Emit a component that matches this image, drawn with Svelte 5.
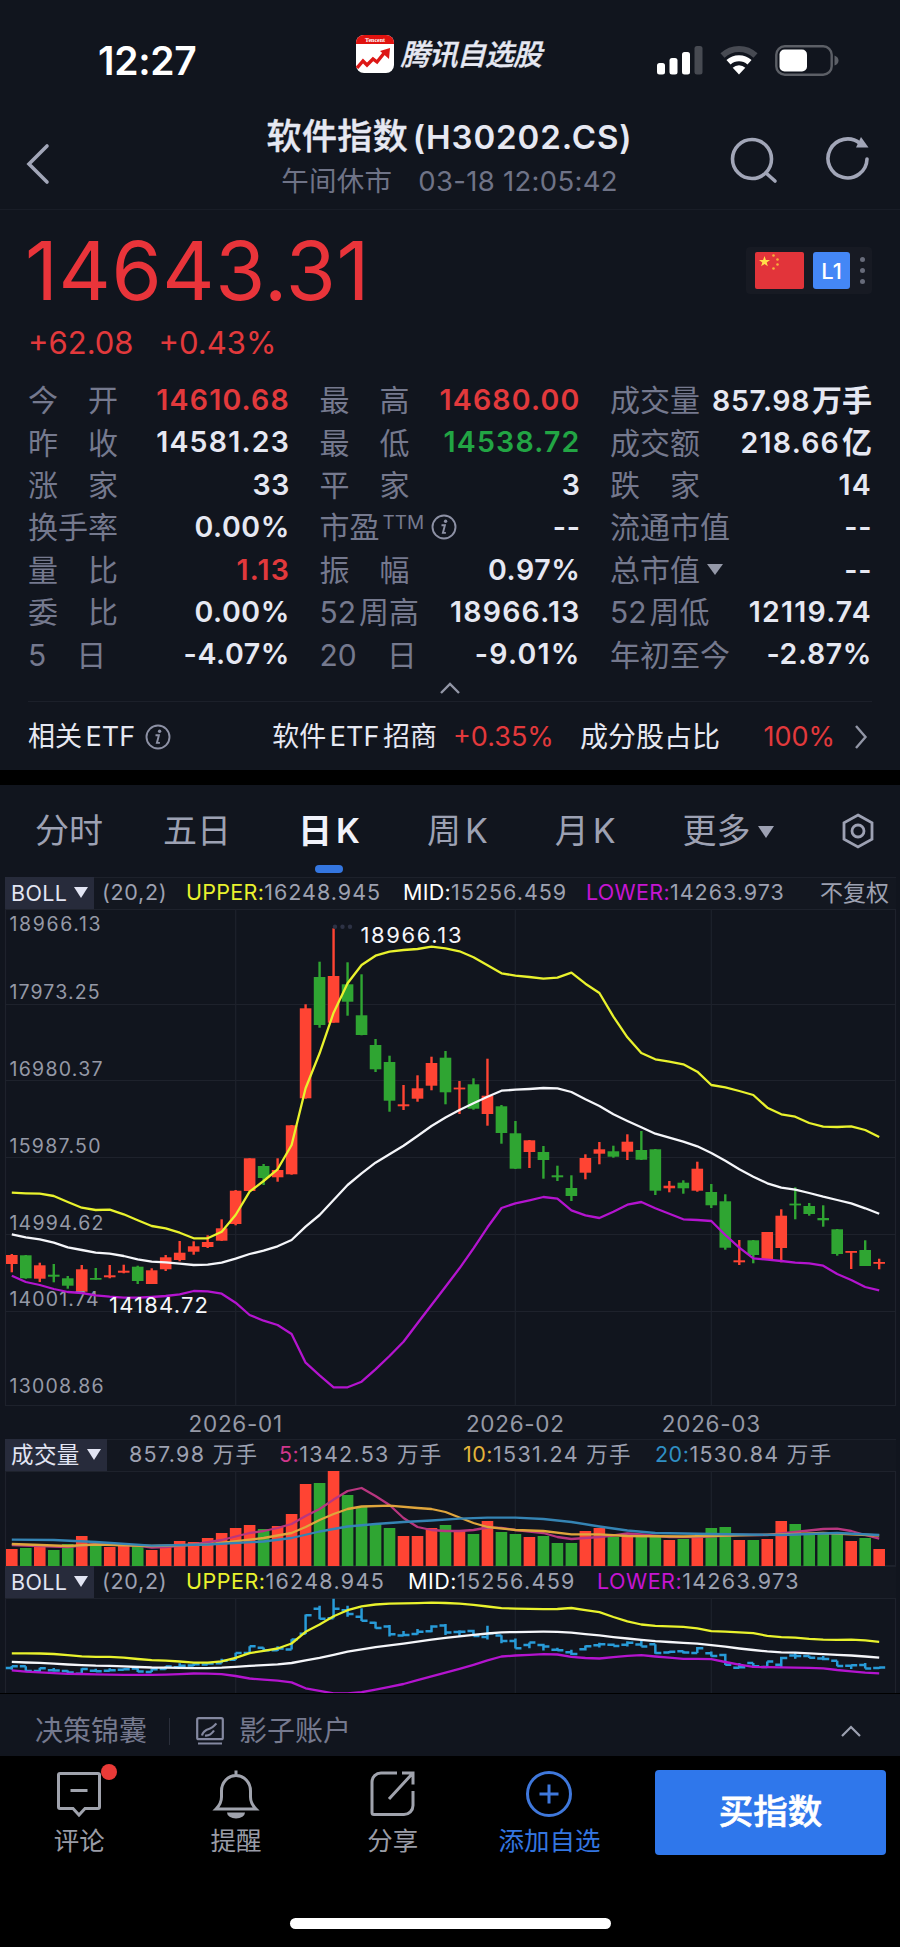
<script>
  const stats = [
    ['今　开', '14610.68', 'up'],
    ['最　高', '14680.00', 'up'],
    ['成交量', '857.98', '', '万手'],
    ['昨　收', '14581.23'],
    ['最　低', '14538.72', 'down'],
    ['成交额', '218.66', '', '亿'],
    ['涨　家', '33'],
    ['平　家', '3'],
    ['跌　家', '14'],
    ['换手率', '0.00%'],
    ['市盈', '--'],
    ['流通市值', '--'],
    ['量　比', '1.13', 'up'],
    ['振　幅', '0.97%'],
    ['总市值', '--'],
    ['委　比', '0.00%'],
    ['52周高', '18966.13'],
    ['52周低', '12119.74'],
    ['5　日', '-4.07%'],
    ['20　日', '-9.01%'],
    ['年初至今', '-2.87%']
  ];

  const tabs = [
    { cn: '分时' },
    { cn: '五日' },
    { cn: '日', latin: 'K', active: true },
    { cn: '周', latin: 'K' },
    { cn: '月', latin: 'K' }
  ];

  // [direction, body top, body bottom, high, low] in chart pixels
  const candles = [
    ['r', 355, 364, 354, 372.3], ['g', 355.3, 378.3, 355, 378.7], ['r', 365.3, 378.7, 362.7, 382],
    ['g', 374.7, 376.7, 364, 382.3], ['g', 378.3, 385.7, 376, 388.7], ['r', 369.3, 391.7, 365, 391.7],
    ['g', 378, 379.7, 368, 379.7], ['r', 375.3, 377.3, 365, 378.3], ['r', 370.7, 372.7, 364.7, 373.3],
    ['g', 366.7, 381, 365.7, 384], ['r', 370.3, 384, 368.3, 384], ['r', 357.3, 369.3, 355, 371],
    ['r', 352.7, 360, 341, 361.3], ['r', 346.3, 351.7, 341.3, 354.7], ['r', 342, 347, 335.3, 348],
    ['r', 328.3, 340.7, 319.3, 341], ['r', 290.7, 324, 290, 325.3], ['r', 258.3, 291, 258.3, 291],
    ['g', 266, 278, 264, 285], ['r', 270, 277.3, 258.3, 281.7], ['r', 225.3, 274.3, 225, 274.7],
    ['r', 108.3, 198.3, 104.3, 198.7], ['g', 77, 125, 61.7, 127.7], ['r', 76, 122.7, 28.3, 122.7],
    ['g', 84.3, 101.7, 62.3, 115.7], ['g', 115.3, 135, 74.3, 135.3], ['g', 145, 169.3, 139, 172],
    ['g', 162, 200.7, 155.7, 211.7], ['r', 204.3, 206.3, 185, 210], ['r', 188.3, 198.7, 175.3, 201.7],
    ['r', 163, 185.7, 156.7, 190.3], ['g', 157.7, 192.3, 151, 204.3], ['r', 187.6, 189.4, 181, 214],
    ['g', 184.3, 208.7, 178.3, 209.7], ['r', 195.7, 214, 158.7, 225.7], ['g', 206.3, 233, 205, 243.7],
    ['g', 233.3, 268.7, 221, 269], ['r', 240.3, 252, 240, 268], ['g', 252, 260, 246, 278.7],
    ['g', 275.3, 277.3, 265.7, 281], ['g', 288, 296, 275.3, 301], ['r', 258, 272.7, 254.3, 279.3],
    ['r', 249.3, 253.7, 242, 264.3], ['g', 251.3, 256.7, 245.7, 257.7], ['r', 241.7, 251.7, 234.3, 260],
    ['g', 250, 259.7, 231, 260], ['g', 249.3, 290.7, 249, 295], ['r', 285.7, 288.3, 281, 292.3],
    ['g', 282.7, 288.3, 280.3, 293.7], ['r', 268.7, 290.7, 261.7, 291.7], ['g', 292, 305.3, 284, 308],
    ['g', 301.3, 347.7, 294.3, 349.7], ['r', 360.3, 362.3, 340, 365], ['g', 340.3, 355, 340, 363.3],
    ['r', 332, 359.3, 332, 359.3], ['r', 315.7, 348, 309.3, 362.3], ['g', 303.6, 305.4, 287.3, 319.3],
    ['g', 306, 314, 303, 315.7], ['g', 318, 320.3, 305.3, 326.7], ['g', 329.3, 354, 329, 355.7],
    ['r', 351, 352.8, 351, 369], ['g', 350, 366, 340.3, 366], ['r', 362, 363.8, 358.7, 369.3]
  ];

  const upper = [
    292.7, 293.3, 293.7, 296, 302, 307.7, 310, 309.7, 314.3, 320.3, 326, 328.3, 332.7, 338.3, 338.3, 331.7,
    315, 291.7, 281, 269.3, 245, 188.3, 153.3, 112.7, 83.3, 65, 55.7, 51.7, 50, 49, 46.7, 48.3, 51.3, 57.3,
    65.3, 73.3, 75.7, 77, 78.7, 77.7, 72.7, 83.7, 93, 116.7, 137.3, 153, 159.3, 161.7, 164.3, 171.7, 185,
    187.3, 191, 195, 207.7, 214.3, 216.7, 223, 226.7, 227, 226.3, 230, 237
  ];
  const mid = [
    334.3, 337.3, 339.3, 342.7, 347.3, 350, 352.7, 353.7, 356, 359.3, 361.7, 362.3, 363.7, 365, 364.7, 362.7,
    358.7, 354, 350.7, 346.3, 340, 326.7, 315, 300, 285, 273.3, 262.7, 254.3, 245.7, 236, 226, 217.5, 210,
    203.3, 196.7, 190.7, 189.7, 189, 188, 188.3, 192, 199.3, 206, 214.3, 221, 227.3, 233.7, 237.7, 241.7,
    246.3, 253, 260.7, 269.3, 276.7, 283.3, 287.7, 289.7, 293, 296.7, 300, 303.3, 308.3, 313.7
  ];
  const lower = [
    375.7, 382, 385, 389, 392, 393, 395.3, 396.7, 397.7, 397.7, 397, 396, 394.3, 391, 391.3, 393.7, 402.7,
    415, 420.7, 425, 434, 462.7, 475.3, 487.3, 487.3, 481.7, 469.3, 456, 441.7, 423.3, 405, 386.7, 368.3,
    348.3, 327.3, 308, 303.3, 300.3, 297, 298.7, 310.3, 315.3, 318, 311.7, 304.7, 302, 308.3, 313.7, 319.3,
    320, 321, 335, 347.7, 358.3, 359.7, 361, 362.7, 363.3, 365.7, 374, 380, 387, 390.3
  ];

  const volumes = [
    17, 18, 19, 16, 22, 30, 20, 19, 20, 20.5, 16, 19, 25, 24, 28, 33, 38, 41, 37, 40, 52, 82, 83, 95, 71, 59,
    42, 38, 30, 30, 38, 41, 35, 32, 45, 34, 32, 29, 30, 23, 23, 35, 38, 29, 30, 29, 30, 26, 27, 29, 38, 39,
    26, 26, 27, 45, 42, 31, 32, 32, 25, 28, 17
  ];

  // [candle index, y] pairs
  const ma5 = [[0, 74], [4, 76], [6, 73], [9, 74.7], [10, 76.5], [11, 76], [13, 73.5], [15, 69], [17, 62], [18, 60], [19, 57], [20, 53], [21, 45], [22, 38], [23, 28.6], [24, 20], [25, 17], [26, 25], [27, 34], [28, 47], [29, 56], [30, 59], [31, 60], [32, 60], [33, 59], [34, 56.5], [35, 57], [36, 59], [38, 62], [39, 66], [40, 68], [42, 66], [43, 64.5], [44, 62.5], [45, 63.5], [47, 66], [49, 66], [52, 64], [54, 64], [56, 61], [58, 58], [59, 57.7], [60, 60], [61, 64], [62, 67.6]];
  const ma10 = [[0, 73], [4, 75], [6, 73.5], [10, 75], [14, 73.5], [18, 67], [20, 62], [21, 56], [22, 49], [23, 43], [24, 38], [25, 35.5], [27, 34.7], [29, 37], [30, 38], [31, 41], [32, 46.5], [33, 52], [34, 56], [36, 59], [38, 60], [40, 63.3], [42, 63.3], [44, 65], [48, 65.5], [52, 64.3], [55, 63.5], [58, 62], [62, 64.5]];
  const ma20 = [[0, 68.6], [3, 69], [6, 71], [10, 74.6], [14, 73.5], [18, 70.5], [20, 67], [22, 60.5], [24, 55.5], [26, 53], [28, 51], [30, 49.5], [32, 47.6], [34, 46.6], [36, 46.7], [38, 48], [40, 51], [42, 55.5], [44, 59.5], [46, 62], [50, 63], [55, 64], [59, 62], [62, 64]];

  const axis = [
    ['18966.13', 30.7, 91], ['17973.25', 99, 90], ['16980.37', 175.7, 93], ['15987.50', 252.7, 91],
    ['14994.62', 330, 94], ['14001.74', 406, 89], ['13008.86', 492.7, 94]
  ];
  const months = [[235.7, '2026-01'], [515.3, '2026-02'], [711.3, '2026-03']];

  const step = 13.99;
  const cx = (i) => 11.8 + i * step;
  const squash = (y) => 55.3 + (y - 292.7) * 0.206;
  const series = (ys) => ys.map((y, i) => `${cx(i).toFixed(1)},${y.toFixed(1)}`).join(' ');
  const sparse = (pts) => pts.map(([i, y]) => `${cx(i).toFixed(1)},${y}`).join(' ');

  function ohlc([dir, top, bottom, high, low], i) {
    const x = cx(i);
    const open = squash(dir === 'r' ? bottom : top);
    const close = squash(dir === 'r' ? top : bottom);
    return `M${x - 6} ${open}H${x}M${x} ${squash(high)}V${squash(low)}M${x} ${close}H${x + 6}`;
  }
</script>

{#snippet info()}
  <svg class="info" width="26" height="26" viewBox="0 0 26 26">
    <circle cx="13" cy="13" r="11.5" />
    <path d="M10.5 11.3h3.4l-2 7.6h3" />
    <circle class="dot" cx="14.6" cy="7.2" r="1.7" />
  </svg>
{/snippet}

<main>
  <div class="status">
    <span class="clock">12:27</span>
    <div class="brand">
      <svg width="38" height="38" viewBox="0 0 38 38">
        <rect width="38" height="38" rx="8" fill="#fff" />
        <path d="M0 9V8a8 8 0 0 1 8-8h22a8 8 0 0 1 8 8v1z" fill="#e0120f" />
        <text x="19" y="7.4" class="logo-text">Tencent</text>
        <path d="M1 33l6-7 4 4 6-6 4 3 8-10" fill="none" stroke="#dd1715" stroke-width="3.4" />
        <path d="M24 16l10-3-1 11z" fill="#dd1715" />
      </svg>
      <span>腾讯自选股</span>
    </div>
    <div class="signals">
      <svg width="46" height="30" viewBox="0 0 46 30">
        <rect x="0" y="18" width="8" height="11.5" rx="2.5" fill="#fff" />
        <rect x="12.5" y="13" width="8" height="16.5" rx="2.5" fill="#fff" />
        <rect x="25" y="7" width="8" height="22.5" rx="2.5" fill="#fff" />
        <rect x="37.5" y="1" width="8" height="28.5" rx="2.5" fill="#474a52" />
      </svg>
      <svg width="38" height="30" viewBox="0 0 38 30">
        <path d="M2.5 10.5a24 24 0 0 1 33 0" fill="none" stroke="#474a52" stroke-width="6" />
        <path d="M8.5 17.3a15.5 15.5 0 0 1 21 0" fill="none" stroke="#fff" stroke-width="6" />
        <path d="M19 29.5l-6.3-6.7a9 9 0 0 1 12.6 0z" fill="#fff" />
      </svg>
      <svg width="64" height="31" viewBox="0 0 64 31">
        <rect x="1.3" y="1.3" width="55.4" height="28.4" rx="8.5" fill="none" stroke="#5c5f66" stroke-width="2.4" />
        <rect x="4.5" y="4.5" width="27.5" height="22" rx="5" fill="#fff" />
        <path d="M59.5 10.5q4 1.5 4 5t-4 5z" fill="#5c5f66" />
      </svg>
    </div>
  </div>

  <header>
    <svg class="back" width="26" height="42" viewBox="0 0 26 42">
      <path d="M22 3L4 21l18 18" />
    </svg>
    <div class="heading">
      <h1>软件指数 <b>(H30202.CS)</b></h1>
      <p><span>午间休市</span><span>03-18 12:05:42</span></p>
    </div>
    <div class="tools">
      <svg width="50" height="50" viewBox="0 0 50 50">
        <circle cx="23" cy="23" r="19.5" />
        <path d="M37 37l9 8" />
      </svg>
      <svg width="46" height="50" viewBox="0 0 46 50">
        <path d="M42 23A19.5 19.5 0 1 1 35 7.500" />
        <path class="solid" d="M36 1l7.500 10.5H31z" />
      </svg>
    </div>
  </header>

  <section class="quote">
    <div class="price-row">
      <strong>14643.31</strong>
      <div class="badges">
        <svg class="flag" width="49" height="37" viewBox="0 0 49 37">
          <rect width="49" height="37" rx="2" fill="#e2343a" />
          <path d="M9.5 4l1.4 3.9h4.1l-3.3 2.5 1.2 3.9-3.4-2.3-3.4 2.3 1.2-3.9L4 7.9h4.1z" fill="#ffde4a" />
          <g fill="#f6b03c">
            <circle cx="18.5" cy="3.5" r="1.3" />
            <circle cx="22.5" cy="7.5" r="1.3" />
            <circle cx="22.5" cy="12.5" r="1.3" />
            <circle cx="18.5" cy="16.5" r="1.3" />
          </g>
        </svg>
        <span class="level">L1</span>
        <span class="dots"><i></i><i></i><i></i></span>
      </div>
    </div>
    <div class="change"><span>+62.08</span><span>+0.43%</span></div>

    <div class="stats">
      {#each stats as [label, value, tone = '', unit]}
        <div class="stat">
          <span class="label">
            {#if label.startsWith('52')}
              52<em>{label.slice(2)}</em>
            {:else}
              {label}
            {/if}
            {#if label === '市盈'}<sup>TTM</sup>{@render info()}{/if}
            {#if label === '总市值'}<i class="tri"></i>{/if}
          </span>
          <span class="value {tone}" class:wide={value.includes('1')}>
            {value}{#if unit}<em>{unit}</em>{/if}
          </span>
        </div>
      {/each}
    </div>
    <svg class="fold" width="22" height="14" viewBox="0 0 22 14"><path d="M2 12l9-9 9 9" /></svg>
    <div class="etf">
      <span class="etf-title">相关 ETF</span>
      {@render info()}
      <span class="etf-name">软件 ETF 招商</span>
      <span class="up">+0.35%</span>
      <span class="etf-share">成分股占比</span>
      <span class="up pct">100%</span>
      <svg width="14" height="26" viewBox="0 0 14 26"><path d="M2 2l9.5 11L2 24" /></svg>
    </div>
  </section>

  <section class="chart">
    <nav>
      {#each tabs as tab}
        <button class:active={tab.active}>{tab.cn}{#if tab.latin}<span>{tab.latin}</span>{/if}</button>
      {/each}
      <button class="more">更多<i class="tri"></i></button>
      <svg width="34" height="36" viewBox="0 0 34 36">
        <path d="M17 2l14 7.8v16.4L17 34 3 26.2V9.8z" />
        <circle cx="17" cy="18" r="6" />
      </svg>
    </nav>

    <div class="legend main-legend">
      <span class="picker">BOLL<i class="tri"></i></span>
      <span class="param">(20,2)</span>
      <span><b class="yellow">UPPER:</b>16248.945</span>
      <span><b class="white">MID:</b>15256.459</span>
      <span><b class="magenta">LOWER:</b>14263.973</span>
      <span class="adjust">不复权</span>
    </div>

    <svg class="plot" width="900" height="530" viewBox="0 9 900 530">
      <g class="grid">
        <path d="M5.5 9.5H895.5V505.5H5.5z" />
        {#each [104.5, 180.5, 257.5, 334.5, 411.5] as y}
          <path d="M5.5 {y}H895.5" />
        {/each}
        {#each months as [x]}
          <path d="M{x} 9V505" />
        {/each}
      </g>
      {#each candles as [dir, top, bottom, high, low], i}
        <g class={dir}>
          <rect x={cx(i) - 1.2} y={high} width="2.4" height={low - high} />
          <rect x={cx(i) - 5.8} y={top} width="11.6" height={bottom - top} />
        </g>
      {/each}
      <g class="axis">
        {#each axis as [text, y, width]}
          <text x="9.5" {y} textLength={width}>{text}</text>
        {/each}
      </g>
      <polyline class="line yellow" points={series(upper)} />
      <polyline class="line white" points={series(mid)} />
      <polyline class="line magenta" points={series(lower)} />
      <g fill="#2d3245">
        <circle cx="335" cy="26.7" r="2.2" />
        <circle cx="342.5" cy="26.7" r="2.2" />
        <circle cx="350" cy="26.7" r="2.2" />
      </g>
      <text class="peak" x="360.5" y="42.7" textLength="101">18966.13</text>
      <text class="peak" x="109" y="412.7" textLength="99">14184.72</text>
      {#each months as [x, text]}
        <text class="month" {x} y="531.5">{text}</text>
      {/each}
    </svg>

    <div class="legend vol-legend">
      <span class="picker">成交量<i class="tri"></i></span>
      <span>857.98 万手</span>
      <span><b class="pink">5:</b>1342.53 万手</span>
      <span><b class="gold">10:</b>1531.24 万手</span>
      <span><b class="blue">20:</b>1530.84 万手</span>
    </div>
    <svg class="plot" width="900" height="95" viewBox="0 0 900 95">
      <g class="grid">
        <path d="M5.5 0.5H895.5V94.5H5.5z" />
        {#each months as [x]}
          <path d="M{x} 0V95" />
        {/each}
      </g>
      {#each volumes as v, i}
        <rect class={candles[i][0]} x={cx(i) - 5.8} y={95 - v} width="11.6" height={v} />
      {/each}
      <polyline class="ma pink" points={sparse(ma5)} />
      <polyline class="ma gold" points={sparse(ma10)} />
      <polyline class="ma blue" points={sparse(ma20)} />
    </svg>

    <div class="legend sub-legend">
      <span class="picker">BOLL<i class="tri"></i></span>
      <span class="param">(20,2)</span>
      <span><b class="yellow">UPPER:</b>16248.945</span>
      <span><b class="white">MID:</b>15256.459</span>
      <span><b class="magenta">LOWER:</b>14263.973</span>
    </div>
    <svg class="plot" width="900" height="95" viewBox="0 0 900 95">
      <g class="grid">
        <path d="M5.5 95V0.5H895.5V95" />
        {#each months as [x]}
          <path d="M{x} 0V95" />
        {/each}
      </g>
      <path class="ohlc" d={candles.map(ohlc).join('')} />
      <polyline class="line yellow" points={series(upper.map(squash))} />
      <polyline class="line white" points={series(mid.map(squash))} />
      <polyline class="line magenta" points={series(lower.map(squash))} />
    </svg>
  </section>

  <div class="extras">
    <span>决策锦囊</span>
    <i class="sep"></i>
    <svg width="28" height="28" viewBox="0 0 28 28">
      <rect x="1.2" y="1.2" width="25.6" height="21" rx="1.5" />
      <path d="M2 26.5h24M6 18.500c1-5 5-6 8-7s4-3 6.500-5M9 18.500c5 .5 7-2 9-5" />
    </svg>
    <span>影子账户</span>
    <svg class="caret" width="22" height="14" viewBox="0 0 22 14"><path d="M2 12l9-9 9 9" /></svg>
  </div>

  <footer>
    <div class="action">
      <div class="icon">
        <svg width="50" height="50" viewBox="0 0 50 50">
          <path d="M6 4.500h38a1.5 1.5 0 0 1 1.5 1.5v32a1.5 1.5 0 0 1-1.5 1.5H31l-6 6.500-6-6.500H6A1.5 1.5 0 0 1 4.500 38V6A1.5 1.5 0 0 1 6 4.500zM16.500 21.500h17" />
        </svg>
        <i class="badge"></i>
      </div>
      <span>评论</span>
    </div>
    <div class="action">
      <svg width="50" height="50" viewBox="0 0 50 50">
        <path d="M25 6V1.500M5 40h40c-4-4-5.500-7-5.500-12v-6a14.500 15.500 0 0 0-29 0v6c0 5-1.500 8-5.500 12z" />
        <path class="solid" d="M16 43.500h18a9 6 0 0 1-18 0z" />
      </svg>
      <span>提醒</span>
    </div>
    <div class="action">
      <svg width="50" height="50" viewBox="0 0 50 50">
        <path d="M29 4H13a9 9 0 0 0-9 9V43.500a2 2 0 0 0 2 2h30a9 9 0 0 0 9-9V22M21 30L44 5M34 4h11V15.500" />
      </svg>
      <span>分享</span>
    </div>
    <div class="action add">
      <svg width="50" height="50" viewBox="0 0 50 50">
        <circle cx="25" cy="25" r="21.5" />
        <path d="M25 15.500v19M15.500 25h19" />
      </svg>
      <span>添加自选</span>
    </div>
    <button class="buy">买指数</button>
  </footer>
  <div class="home"><i></i></div>
</main>

<style>
  :global(body) {
    background: #000;
  }

  main {
    width: 900px;
    height: 1947px;
    overflow: hidden;
    background: #000;
    color: #e6e8f2;
    font-family: Inter, 'Noto Sans CJK SC', sans-serif;
    line-height: 1;
    white-space: nowrap;
  }

  svg {
    display: block;
    flex: none;
  }

  em,
  i {
    font-style: normal;
  }

  button {
    background: none;
    border: none;
    padding: 0;
    font: inherit;
    color: inherit;
  }

  .up {
    color: #e2393c;
  }

  .down {
    color: #22a544;
  }

  .tri {
    display: inline-block;
    border: 8px solid transparent;
    border-top: 11px solid currentColor;
    border-bottom: 0;
  }

  .info {
    fill: none;
    stroke: #8d91a5;
    stroke-width: 1.9;
  }

  .info .dot {
    fill: #8d91a5;
    stroke: none;
  }

  /* Status bar */
  .status {
    display: flex;
    align-items: center;
    height: 120px;
    padding: 0 61px 0 98px;
    background: #11151e;
  }

  .clock {
    width: 258px;
    font-size: 39px;
    font-weight: 600;
    letter-spacing: -0.3px;
    color: #fff;
  }

  .brand {
    display: flex;
    align-items: center;
    gap: 7px;
    width: 302px;
    margin-top: -12px;
    font-size: 29px;
    font-weight: 500;
    font-style: italic;
    letter-spacing: -0.9px;
    -webkit-text-stroke: 0.4px currentColor;
  }

  .logo-text {
    font: 700 6px 'Liberation Serif', serif;
    letter-spacing: 0;
    -webkit-text-stroke: 0;
    fill: #fff;
    text-anchor: middle;
  }

  .signals {
    display: flex;
    align-items: center;
    gap: 17px;
  }

  /* Title bar */
  header {
    display: flex;
    align-items: center;
    justify-content: space-between;
    height: 90px;
    padding: 0 29px 0 25px;
    box-sizing: border-box;
    background: #11151e;
    border-bottom: 1px solid #191d27;
  }

  header svg {
    fill: none;
    stroke: #a2a6b8;
    stroke-width: 3.6;
    stroke-linecap: round;
  }

  .back {
    margin-top: -1px;
  }

  .heading {
    margin: -14px 0 0 119px;
    text-align: center;
  }

  h1 {
    margin: 0;
    font-size: 35px;
    font-weight: 500;
    letter-spacing: 0.4px;
    word-spacing: -5px;
    -webkit-text-stroke: 0.4px currentColor;
  }

  h1 b {
    font-size: 33px;
    font-weight: 600;
    letter-spacing: 0.9px;
    -webkit-text-stroke: 0;
  }

  .heading p {
    display: flex;
    justify-content: center;
    gap: 26px;
    margin: 14px 0 0;
    font-size: 27.5px;
    letter-spacing: 0.3px;
    color: #6f7387;
  }

  .tools {
    display: flex;
    gap: 46px;
    margin-top: -8px;
  }

  .tools .solid {
    fill: #a2a6b8;
    stroke: none;
  }

  /* Quote */
  .quote {
    height: 560px;
    padding: 0 28px;
    box-sizing: border-box;
    background: #11151e;
  }

  .price-row {
    display: flex;
    justify-content: space-between;
    height: 115px;
    align-items: center;
  }

  .price-row strong {
    margin: 8px 0 0 -3px;
    font-size: 81px;
    font-weight: 400;
    letter-spacing: 0.6px;
    color: #e9343a;
  }

  .badges {
    display: flex;
    align-items: center;
    gap: 9px;
    margin-top: 6px;
    padding: 5px 7px 5px 9px;
    background: #171a23;
    border-radius: 4px;
  }

  .level {
    width: 37px;
    height: 37px;
    border-radius: 3px;
    background: #4487f6;
    color: #fff;
    font-size: 22px;
    font-weight: 500;
    line-height: 38px;
    text-align: center;
  }

  .dots {
    display: grid;
    gap: 6px;
    padding-left: 1px;
  }

  .dots i {
    width: 5px;
    height: 5px;
    border-radius: 50%;
    background: #676b7a;
  }

  .change {
    display: flex;
    gap: 25px;
    height: 64px;
    align-items: center;
    margin-top: -17px;
    padding-top: 2px;
    font-size: 31px;
    color: #e2393c;
  }

  .stats {
    display: grid;
    grid-template-columns: 262px 261px 262px;
    column-gap: 29.5px;
    grid-auto-rows: 42.4px;
    margin-top: 5px;
  }

  .stat {
    display: flex;
    align-items: center;
    justify-content: space-between;
  }

  .label {
    display: flex;
    align-items: center;
    font-size: 30px;
    color: #75798e;
  }

  .label em {
    margin-left: 3px;
  }

  .label sup {
    margin: -10px 7px 0 3px;
    font-size: 19px;
    line-height: 1;
  }

  .label .tri {
    margin-left: 7px;
    border-width: 11px 8px 0;
    color: #9498a8;
  }

  .value {
    font-size: 28.5px;
    font-weight: 600;
    letter-spacing: 0.6px;
  }

  .value.wide {
    letter-spacing: 1.2px;
  }

  .value em {
    margin-left: 2px;
    font-size: 30px;
    letter-spacing: 0;
  }

  .fold {
    margin: 5px auto 6px;
    fill: none;
    stroke: #9296a6;
    stroke-width: 2.4;
  }

  .etf {
    display: flex;
    align-items: center;
    height: 70px;
    border-top: 1px solid #1c202a;
    font-size: 27px;
    word-spacing: -4px;
  }

  .etf .info {
    margin-left: 10px;
  }

  .etf-name {
    margin: 0 16px 0 101px;
  }

  .etf-share {
    margin-left: 26px;
    font-size: 28px;
  }

  .etf .pct {
    margin-left: auto;
    margin-right: 19px;
  }

  .etf > svg:last-child {
    margin-right: 4px;
    fill: none;
    stroke: #9296a6;
    stroke-width: 2.4;
  }

  /* Chart */
  .chart {
    margin-top: 15px;
    background: #11151e;
  }

  nav {
    display: flex;
    gap: 67px;
    align-items: center;
    height: 92px;
    padding: 0 44px 0 35px;
    font-size: 34px;
    color: #9da1b3;
  }

  nav button {
    position: relative;
    height: 92px;
  }

  nav button:nth-child(2) {
    margin-left: -7px;
  }

  nav button span {
    margin-left: 4px;
  }

  nav .active {
    color: #f1f2fa;
    font-weight: 600;
  }

  nav .active::after {
    content: '';
    position: absolute;
    left: 50%;
    bottom: 4px;
    width: 28px;
    height: 8px;
    margin-left: -14px;
    border-radius: 4px;
    background: #3476e0;
  }

  nav .tri {
    margin: 0 0 5px 7px;
    border-top-width: 12px;
  }

  nav svg {
    margin-left: auto;
    fill: none;
    stroke: #9da1b3;
    stroke-width: 2.8;
  }

  .legend {
    display: grid;
    align-items: center;
    height: 32px;
    margin: 0 4px 0 5px;
    font-size: 21.5px;
    letter-spacing: 1.3px;
    color: #9da1b1;
    background: #131720;
    box-shadow: inset 0 1px #1d212b;
  }

  .legend b {
    font-weight: 400;
    letter-spacing: 0.5px;
  }

  .main-legend {
    grid-template-columns: 97px 84px 217px 183px 1fr auto;
    padding-right: 7px;
    letter-spacing: 1px;
  }

  .main-legend b {
    letter-spacing: 0.3px;
  }

  .legend .param {
    letter-spacing: 0.7px;
  }

  .sub-legend {
    grid-template-columns: 97px 84px 222px 189px 1fr;
  }

  .vol-legend {
    grid-template-columns: 124px 150px 184px 192px 1fr;
  }

  .picker {
    justify-self: start;
    box-sizing: border-box;
    height: 32px;
    padding: 0 6px;
    line-height: 32px;
    letter-spacing: 0.4px;
    color: #e2e5f3;
    background: #272b3b;
  }

  .vol-legend .picker {
    font-size: 22.5px;
  }

  .picker .tri {
    margin: 0 0 3px 7px;
    border-width: 11px 7px 0;
  }

  .adjust {
    font-size: 23px;
    letter-spacing: 0;
  }

  .legend .yellow { color: #e9f22d; }
  .legend .white { color: #fff; }
  .legend .magenta { color: #c615d2; }
  .legend .pink { color: #d0368c; }
  .legend .gold { color: #e3b43a; }
  .legend .blue { color: #2f8fc4; }

  .grid {
    fill: none;
    stroke: #1e222c;
    stroke-width: 1.2;
  }

  .r {
    fill: #ff4433;
  }

  .g {
    fill: #2fa532;
  }

  .line,
  .ma {
    fill: none;
    stroke-width: 2.3;
    stroke-linejoin: round;
  }

  .line.yellow { stroke: #e9f22d; }
  .line.white { stroke: #f5f6fa; }
  .line.magenta { stroke: #b414cf; }
  .ma.pink { stroke: #b8367f; }
  .ma.gold { stroke: #dfa53c; }
  .ma.blue { stroke: #3584b4; }

  .ohlc {
    fill: none;
    stroke: #289bd8;
    stroke-width: 2.5;
  }

  .axis text {
    font-size: 19.5px;
    fill: #9599a6;
  }

  .peak {
    font-size: 22px;
    fill: #f5f6fa;
  }

  .month {
    font-size: 22.5px;
    letter-spacing: 0.7px;
    text-anchor: middle;
    fill: #9599a6;
  }

  /* Bottom */
  .extras {
    display: flex;
    align-items: center;
    height: 63px;
    padding: 12px 38px 0 35px;
    box-sizing: border-box;
    border-top: 1px solid #000;
    background: #11151e;
    font-size: 28px;
    color: #75798e;
  }

  .extras svg {
    margin-right: 15px;
    fill: none;
    stroke: #8488a0;
    stroke-width: 2.2;
  }

  .extras .caret {
    margin: 0 0 0 auto;
    stroke: #9da1b1;
  }

  .sep {
    width: 1px;
    height: 27px;
    margin: 0 26px 0 22px;
    background: #2b2f3b;
  }

  footer {
    display: flex;
    height: 112px;
    padding: 13px 14px 0 1px;
    box-sizing: border-box;
  }

  .action {
    display: flex;
    flex-direction: column;
    align-items: center;
    gap: 9px;
    width: 156.7px;
    font-size: 25.5px;
    color: #9a9ca6;
  }

  .action svg {
    fill: none;
    stroke: #a0a3ad;
    stroke-width: 3;
  }

  .action .solid {
    fill: #a0a3ad;
    stroke: none;
  }

  .icon {
    position: relative;
  }

  .badge {
    position: absolute;
    right: -13px;
    top: -5px;
    width: 16px;
    height: 16px;
    border-radius: 50%;
    background: #e93a37;
  }

  .action.add {
    color: #3476e0;
  }

  .add svg {
    stroke: #3f78dc;
  }

  .buy {
    width: 231px;
    height: 85px;
    margin: 1px 0 0 auto;
    border-radius: 4px;
    background: #2f77eb;
    color: #fff;
    font-size: 34.5px;
    font-weight: 500;
    -webkit-text-stroke: 0.6px currentColor;
  }

  .home {
    display: flex;
    justify-content: center;
    padding-top: 50px;
  }

  .home i {
    width: 321px;
    height: 11px;
    border-radius: 6px;
    background: #fff;
  }
</style>
